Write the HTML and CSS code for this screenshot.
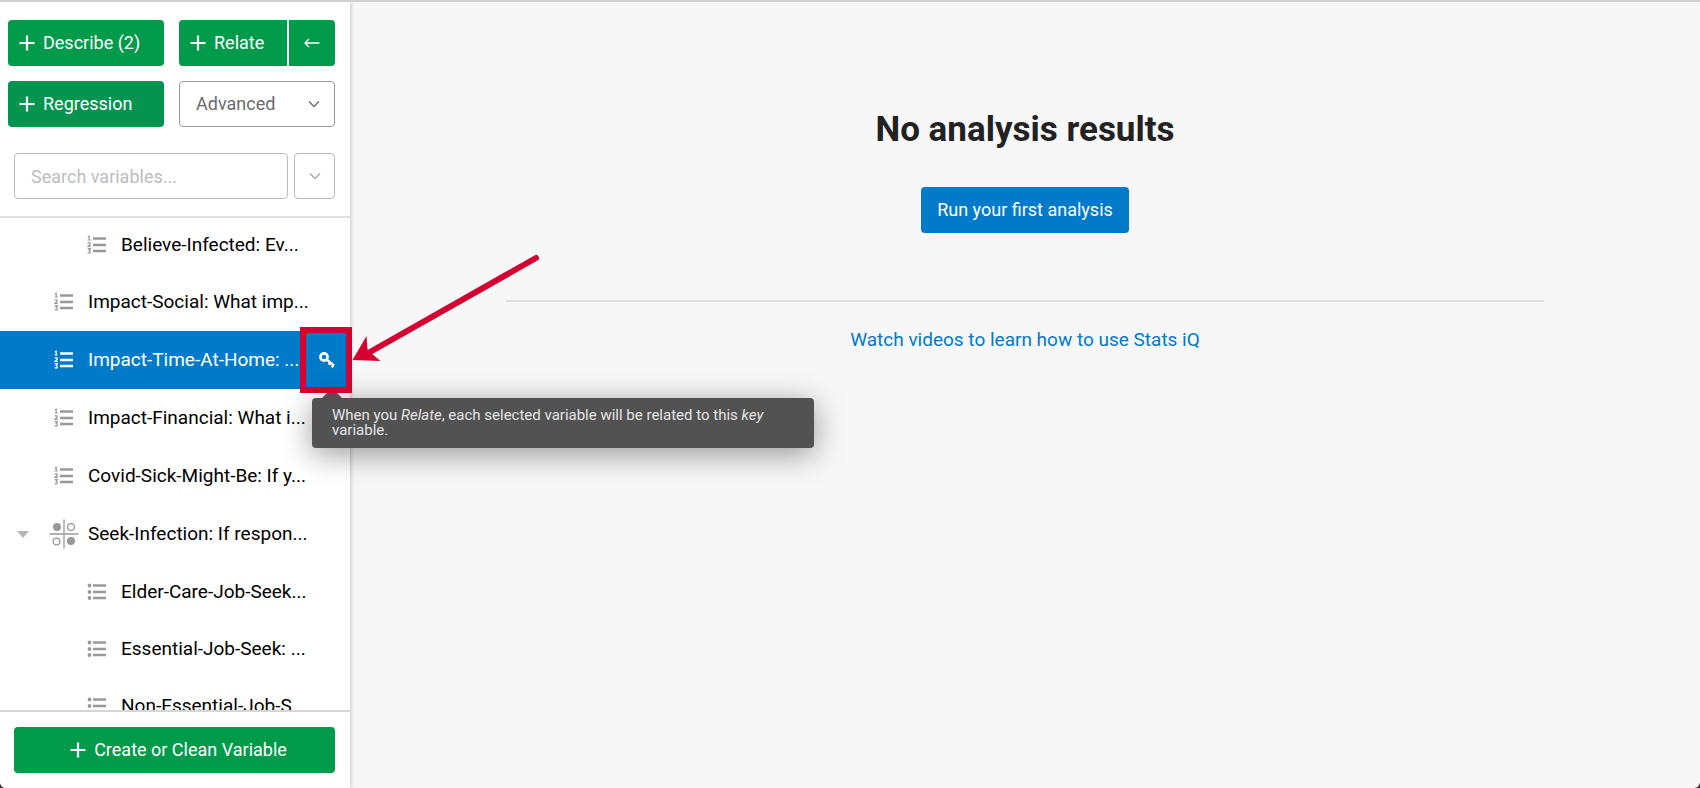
FILE: index.html
```html
<!DOCTYPE html>
<html lang="en">
<head>
<meta charset="utf-8">
<meta name="viewport" content="width=device-width, initial-scale=1">
<title>Stats iQ</title>
<link rel="stylesheet" href="styles.css">
</head>
<body>
<svg class="sprite" aria-hidden="true">
  <symbol id="plus" viewBox="0 0 16 16"><path d="M8 0.500V15.500M0.500 8H15.500" fill="none" stroke="currentColor" stroke-width="2.200"/></symbol>
  <symbol id="chevron" viewBox="0 0 12 8"><path d="M1 1.500L6 6.500L11 1.500" fill="none" stroke="currentColor" stroke-width="1.400"/></symbol>
  <symbol id="numbered" viewBox="0 0 20 20">
    <path d="M6 3.500H19M6 10H19M6 16H19" fill="none" stroke="currentColor" stroke-width="2.600"/>
    <path d="M0.800 2L2.200 1.200V4.500M0.600 5H3.800M0.700 7.800H3L3.200 9.200L1 11.300H3.800M0.700 13.600H3.300L2 15.300L3.300 16L3 17.800H0.600" fill="none" stroke="currentColor" stroke-width="1.200"/>
  </symbol>
  <symbol id="bulleted" viewBox="0 0 20 20">
    <path d="M6 3.500H19M6 10H19M6 16H19" fill="none" stroke="currentColor" stroke-width="2.600"/>
    <g fill="currentColor"><circle cx="2.500" cy="3.500" r="1.900"/><circle cx="2.500" cy="10" r="1.900"/><circle cx="2.500" cy="16" r="1.900"/></g>
  </symbol>
  <symbol id="matrix" viewBox="0 0 30 30">
    <path d="M15 0.500V29.500M0.500 15H29.500" fill="none" stroke="currentColor" stroke-width="1.300"/>
    <g fill="currentColor"><circle cx="8" cy="8" r="4"/><circle cx="22" cy="22" r="4"/></g>
    <g fill="none" stroke="currentColor" stroke-width="1.300"><circle cx="22" cy="8" r="3.400"/><circle cx="7.500" cy="22.500" r="3.400"/></g>
  </symbol>
</svg>
<div class="app">
  <aside class="sidebar">
    <div class="tools">
      <div class="actions">
        <button class="btn green" type="button"><svg class="plus"><use href="#plus"/></svg>Describe (2)</button>
        <div class="split">
          <button class="btn green relate" type="button"><svg class="plus"><use href="#plus"/></svg>Relate</button>
          <button class="btn green back" type="button" aria-label="Relate direction"><svg class="arrow-left" viewBox="0 0 16 10"><path d="M15.500 5H1M5 1L1 5L5 9" fill="none" stroke="currentColor" stroke-width="1.300"/></svg></button>
        </div>
        <button class="btn green regression" type="button"><svg class="plus"><use href="#plus"/></svg>Regression</button>
        <button class="btn advanced" type="button">Advanced<svg class="chevron"><use href="#chevron"/></svg></button>
      </div>
      <div class="search">
        <input class="field" type="text" placeholder="Search variables..." aria-label="Search variables">
        <button class="btn filter" type="button" aria-label="Filter variables"><svg class="chevron"><use href="#chevron"/></svg></button>
      </div>
    </div>
    <div class="list-wrap">
      <ul class="list">
        <li class="row nested"><svg class="type"><use href="#numbered"/></svg><span>Believe-Infected: Ev...</span></li>
        <li class="row"><svg class="type"><use href="#numbered"/></svg><span>Impact-Social: What imp...</span></li>
        <li class="row selected"><svg class="type"><use href="#numbered"/></svg><span>Impact-Time-At-Home: ...</span>
          <button class="key" type="button" aria-label="Key variable"><svg class="key-icon" viewBox="0 0 16 16"><circle cx="5" cy="5" r="3.600" fill="none" stroke="currentColor" stroke-width="2.600"/><path d="M7.500 7.500L15 13.500M11.500 10.500L9.800 12.800M14.600 12.800L12.800 15.300" fill="none" stroke="currentColor" stroke-width="2.300"/></svg></button>
        </li>
        <li class="row"><svg class="type"><use href="#numbered"/></svg><span>Impact-Financial: What i...</span></li>
        <li class="row"><svg class="type"><use href="#numbered"/></svg><span>Covid-Sick-Might-Be: If y...</span></li>
        <li class="row group"><button class="toggle" type="button" aria-label="Collapse group"><svg class="caret" viewBox="0 0 12 7"><path d="M0 0H12L6 7Z" fill="currentColor"/></svg></button><svg class="matrix"><use href="#matrix"/></svg><span>Seek-Infection: If respon...</span></li>
        <li class="row nested"><svg class="type"><use href="#bulleted"/></svg><span>Elder-Care-Job-Seek...</span></li>
        <li class="row nested"><svg class="type"><use href="#bulleted"/></svg><span>Essential-Job-Seek: ...</span></li>
        <li class="row nested"><svg class="type"><use href="#bulleted"/></svg><span>Non-Essential-Job-S...</span></li>
      </ul>
    </div>
    <div class="footer">
      <button class="btn green create" type="button"><svg class="plus"><use href="#plus"/></svg>Create or Clean Variable</button>
    </div>
  </aside>
  <main class="main">
    <h1 class="title">No analysis results</h1>
    <button class="btn run" type="button">Run your first analysis</button>
    <div class="learn"><a class="link" href="#videos">Watch videos to learn how to use Stats iQ</a></div>
  </main>
  <div class="tooltip" role="tooltip">When you <em>Relate</em>, each selected variable will be related to this <em>key</em> variable.</div>
  <div class="highlight"></div>
  <svg class="pointer" viewBox="0 0 190 114" aria-hidden="true"><path d="M184 8L18 102" fill="none" stroke="#d50032" stroke-width="6" stroke-linecap="round"/><path d="M0.500 110L14.500 86L15.500 99.500L20.700 104.500L28.500 111Z" fill="#d50032"/></svg>
</div>
</body>
</html>
```
FILE: styles.css
```css
* { box-sizing: border-box; }
html { background: #333; }
body {
  margin: 0;
  font-family: Roboto, "Liberation Sans", sans-serif;
  font-size: 18px;
  line-height: 24px;
  color: #000;
}
button, input { font: inherit; }
button { margin: 0; padding: 0; border: 0; cursor: pointer; }
svg { display: block; flex: none; }
.sprite { position: absolute; width: 0; height: 0; }

.app {
  position: relative;
  display: flex;
  height: 100vh;
  border-top: 2px solid #d0d0d0;
  border-radius: 0 0 6px 6px;
  background: #f7f7f7;
  overflow: hidden;
}
.sidebar {
  display: flex;
  flex-direction: column;
  flex: none;
  width: 350px;
  background: #fff;
  box-shadow: 1px 0 4px rgba(0, 0, 0, 0.2);
}
.tools {
  padding: 18px 15px 17px 8px;
  border-bottom: 2px solid #e0e0e0;
}
.actions {
  display: grid;
  grid-template-columns: 1fr 1fr;
  gap: 15px;
}
.btn {
  display: flex;
  align-items: center;
  height: 46px;
  border-radius: 4px;
  white-space: nowrap;
}
.green { gap: 8px; padding-left: 11px; background: #009a4b; color: #fff; }
.regression { background: #04944f; }
.plus { width: 16px; height: 16px; }
.split { display: flex; gap: 2px; }
.relate { flex: 1; border-radius: 4px 0 0 4px; }
.back { width: 46px; padding: 0; justify-content: center; border-radius: 0 4px 4px 0; }
.arrow-left { width: 16px; height: 10px; }
.chevron { width: 12px; height: 8px; }
.advanced {
  justify-content: space-between;
  padding: 0 14px 0 16px;
  border: 1px solid #999;
  background: #fff;
  color: #6b6b6b;
}
.search { display: flex; gap: 6px; margin: 26px 0 0 6px; }
.field {
  flex: 1;
  min-width: 0;
  height: 46px;
  padding: 0 16px;
  border: 1px solid #bbb;
  border-radius: 4px;
  background: #fff;
  color: #333;
}
.field::placeholder { color: #bdbdbd; opacity: 1; }
.filter {
  width: 41px;
  justify-content: center;
  border: 1px solid #bbb;
  background: #fff;
  color: #aaa;
}

.list-wrap { flex: 1; min-height: 0; overflow: hidden; }
.list { margin: -2px 0 0; padding: 0; list-style: none; font-size: 19px; }
.row {
  display: flex;
  align-items: center;
  height: 58px;
  padding-left: 54px;
  white-space: nowrap;
}
.nested { height: 57px; padding-left: 87px; }
.group { gap: 9px; padding-left: 17px; }
.selected { background: #007ac9; color: #fff; }
.type { width: 20px; height: 20px; margin-right: 14px; color: #999; }
.selected .type { color: #fff; }
.matrix { width: 30px; height: 30px; color: #999; }
.toggle { width: 23px; background: none; color: #b5b5b5; }
.caret { width: 12px; height: 7px; }
.key {
  display: flex;
  align-items: center;
  justify-content: center;
  width: 46px;
  height: 58px;
  margin-left: auto;
  background: none;
  color: #fff;
}
.key-icon { width: 16px; height: 16px; }
.footer { padding: 15px 15px 15px 14px; border-top: 2px solid #d6d6d6; }
.create { justify-content: center; width: 100%; padding: 0 0 0 8px; }

.main {
  flex: 1;
  display: flex;
  flex-direction: column;
  align-items: center;
  padding: 106px 156px 0;
}
.title { margin: 0; font-size: 35px; line-height: 44px; font-weight: 700; color: #222; }
.run { margin-top: 35px; padding: 0 16px; background: #007ac9; color: #fff; }
.learn {
  width: 100%;
  margin-top: 67px;
  padding-top: 26px;
  border-top: 2px solid #e0e0e0;
  font-size: 19px;
  text-align: center;
}
.link { color: #007ac9; text-decoration: none; }

.tooltip {
  position: absolute;
  left: 312px;
  top: 396px;
  width: 502px;
  padding: 10px 20px;
  border-radius: 4px;
  background: #525252;
  color: #e4e4e4;
  font-size: 15px;
  line-height: 15px;
  box-shadow: 0 6px 30px rgba(0, 0, 0, 0.4);
}
.tooltip::before {
  content: "";
  position: absolute;
  left: 10px;
  top: -10px;
  border: solid transparent;
  border-width: 0 10px 10px;
  border-bottom-color: #525252;
}
.highlight {
  position: absolute;
  left: 300px;
  top: 325px;
  width: 52px;
  height: 66px;
  border: 6px solid #d50032;
}
.pointer { position: absolute; left: 352px; top: 248px; width: 190px; height: 114px; }
```
